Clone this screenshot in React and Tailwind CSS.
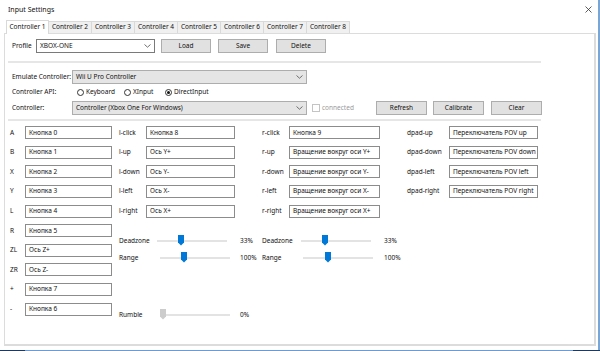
import React from 'react'

const leftRows = [
  ['A', 'Кнопка 0'],
  ['B', 'Кнопка 1'],
  ['X', 'Кнопка 2'],
  ['Y', 'Кнопка 3'],
  ['L', 'Кнопка 4'],
  ['R', 'Кнопка 5'],
  ['ZL', 'Ось Z+'],
  ['ZR', 'Ось Z-'],
  ['+', 'Кнопка 7'],
  ['-', 'Кнопка 6'],
]

const stickRows = [
  [['l-click', 'Кнопка 8'], ['r-click', 'Кнопка 9'], ['dpad-up', 'Переключатель POV up']],
  [['l-up', 'Ось Y+'], ['r-up', 'Вращение вокруг оси Y+'], ['dpad-down', 'Переключатель POV down']],
  [['l-down', 'Ось Y-'], ['r-down', 'Вращение вокруг оси Y-'], ['dpad-left', 'Переключатель POV left']],
  [['l-left', 'Ось X-'], ['r-left', 'Вращение вокруг оси X-'], ['dpad-right', 'Переключатель POV right']],
  [['l-right', 'Ось X+'], ['r-right', 'Вращение вокруг оси X+'], null],
]

const tabs = ['Controller 1', 'Controller 2', 'Controller 3', 'Controller 4', 'Controller 5', 'Controller 6', 'Controller 7', 'Controller 8']

function Chevron() {
  return (
    <svg width="7" height="4" viewBox="0 0 7 4" className="shrink-0">
      <path d="M0.5 0.5 L3.5 3.2 L6.5 0.5" fill="none" stroke="#606060" strokeWidth="0.9" />
    </svg>
  )
}

function Combo({ value, className, gray }) {
  return (
    <div
      className={`h-[14px] flex items-center justify-between pl-[3px] pr-[3px] border ${
        gray ? 'bg-[#e5e5e5] border-[#adadad]' : 'bg-white border-[#7a7a7a]'
      } ${className}`}
    >
      <span className="whitespace-nowrap">{value}</span>
      <Chevron />
    </div>
  )
}

function Button({ children, className }) {
  return (
    <div className={`h-[14px] w-[50px] flex items-center justify-center bg-[#e1e1e1] border border-[#adadad] ${className || ''}`}>
      {children}
    </div>
  )
}

function Field({ value, w }) {
  return (
    <div className={`${w} h-[13px] border border-[#8c8c8c] bg-white pl-[3px] flex items-center overflow-hidden whitespace-nowrap`}>
      {value}
    </div>
  )
}

function Radio({ label, checked, className }) {
  return (
    <div className={`flex items-center ${className}`}>
      <div className="w-[7px] h-[7px] rounded-full border border-[#333] flex items-center justify-center mr-[2px]">
        {checked && <div className="w-[3px] h-[3px] rounded-full bg-[#111]" />}
      </div>
      <span>{label}</span>
    </div>
  )
}

function Slider({ label, labelW, pos, value, valueGap, gray }) {
  return (
    <div className="flex items-center w-[143px]">
      <span className={labelW}>{label}</span>
      <div className="relative w-[70px] h-[11px] flex items-center">
        <div className="w-full h-[2px] bg-[#e3e3e3]" />
        <svg width="6" height="11" viewBox="0 0 6 11" className="absolute top-0" style={{ left: pos - 3 }}>
          <path d="M0 0 H6 V7.5 L3 10.5 L0 7.5 Z" fill={gray ? '#cccccc' : '#0078d7'} />
        </svg>
      </div>
      <span className={valueGap}>{value}</span>
    </div>
  )
}

export default function App() {
  return (
    <div className="w-[600px] h-[351px] bg-white flex flex-col overflow-hidden font-['Noto_Sans',sans-serif] text-[6.5px] text-[#111] leading-none">
      <div className="flex-1 flex flex-col border-r-2 border-[#7aa6d6]">
        <div className="h-[19px] flex items-center justify-between pl-[8px] pr-[6px]">
          <span className="text-[7px]">Input Settings</span>
          <svg width="7" height="7" viewBox="0 0 7 7">
            <path d="M0.5 0.5 L6.5 6.5 M6.5 0.5 L0.5 6.5" stroke="#333" strokeWidth="0.8" />
          </svg>
        </div>

        <div className="flex items-end h-[14px] pl-[6px]">
          {tabs.map((t, i) =>
            i === 0 ? (
              <div key={t} className="w-[43px] h-[14px] bg-white border border-b-0 border-[#d9d9d9] flex items-center justify-center relative z-10 -mb-px">
                {t}
              </div>
            ) : (
              <div key={t} className="w-[43px] h-[12px] bg-[#f0f0f0] border border-l-0 border-b-0 border-[#d9d9d9] flex items-center justify-center">
                {t}
              </div>
            )
          )}
        </div>

        <div className="ml-[4px] mr-[2px] h-[313px] border border-r-2 border-b-2 border-[#dcdcdc] bg-white flex flex-col">
          {/* profile */}
          <div className="flex items-center h-[14px] mt-[5px] pl-[7px]">
            <span className="w-[24px]">Profile</span>
            <Combo value="XBOX-ONE" className="w-[119px]" />
            <Button className="ml-[6px]">Load</Button>
            <Button className="ml-[7px]">Save</Button>
            <Button className="ml-[8px]">Delete</Button>
          </div>

          <div className="ml-[3px] w-[533px] h-[2px] bg-[#e6e6e6] mt-[8px]" />

          {/* emulate */}
          <div className="flex items-center h-[14px] mt-[7px] pl-[7px]">
            <span className="w-[60px]">Emulate Controller:</span>
            <Combo value="Wii U Pro Controller" className="w-[235px]" gray />
          </div>
          <div className="flex items-center h-[13px] mt-[2px] pl-[7px]">
            <span className="w-[65px]">Controller API:</span>
            <Radio label="Keyboard" className="w-[47px]" />
            <Radio label="XInput" className="w-[41px]" />
            <Radio label="DirectInput" checked />
          </div>
          <div className="flex items-center h-[14px] mt-[2px] pl-[7px]">
            <span className="w-[60px]">Controller:</span>
            <Combo value="Controller (Xbox One For Windows)" className="w-[235px]" gray />
            <div className="w-[8px] h-[8px] border border-[#c4c4c4] ml-[5px] mr-[2px]" />
            <span className="text-[#9a9a9a] w-[54px]">connected</span>
            <Button className="w-[51px]">Refresh</Button>
            <Button className="w-[51px] ml-[6px]">Calibrate</Button>
            <Button className="w-[51px] ml-[7px]">Clear</Button>
          </div>

          <div className="ml-[3px] w-[533px] h-[2px] bg-[#e6e6e6] mt-[4px]" />

          {/* mapping */}
          <div className="flex mt-[2px] pl-[5px]">
            <div className="flex flex-col">
              {leftRows.map(([k, v]) => (
                <div key={k} className="h-[19.6px] flex items-center">
                  <span className="w-[15px]">{k}</span>
                  <Field value={v} w="w-[87px]" />
                </div>
              ))}
            </div>

            <div className="flex flex-col ml-[7px]">
              {stickRows.map((row, i) => (
                <div key={i} className="h-[19.6px] flex items-center">
                  <span className="w-[27px]">{row[0][0]}</span>
                  <Field value={row[0][1]} w="w-[89px]" />
                  <span className="w-[27px] ml-[27px]">{row[1][0]}</span>
                  <Field value={row[1][1]} w="w-[91px]" />
                  {row[2] && (
                    <>
                      <span className="w-[42px] ml-[27px]">{row[2][0]}</span>
                      <Field value={row[2][1]} w="w-[89px]" />
                    </>
                  )}
                </div>
              ))}

              <div className="flex h-[16px] mt-[12px]">
                <Slider label="Deadzone" labelW="w-[38px]" pos={24} value="33%" valueGap="ml-[13px]" />
                <Slider label="Deadzone" labelW="w-[39px]" pos={24} value="33%" valueGap="ml-[13px]" />
              </div>
              <div className="flex h-[16px] mt-[1px]">
                <Slider label="Range" labelW="w-[41px]" pos={24} value="100%" valueGap="ml-[10px]" />
                <Slider label="Range" labelW="w-[41px]" pos={25} value="100%" valueGap="ml-[11px]" />
              </div>
              <div className="flex h-[16px] mt-[41px]">
                <Slider label="Rumble" labelW="w-[41px]" pos={3} value="0%" valueGap="ml-[10px]" gray />
              </div>
            </div>
          </div>
        </div>
        <div className="flex-1" />
      </div>
      <div className="h-[1px] flex">
        <div className="w-[25px] bg-[#1b3a5c]" />
        <div className="flex-1 bg-[#6b9bd1]" />
        <div className="w-[27px] bg-[#1b3a5c]" />
      </div>
    </div>
  )
}
